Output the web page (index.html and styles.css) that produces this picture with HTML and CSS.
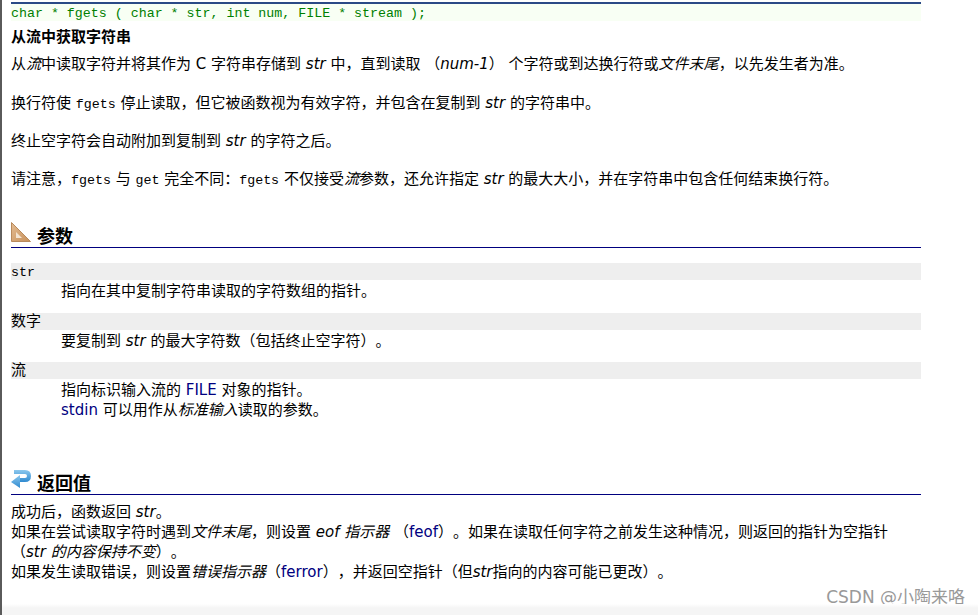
FILE: index.html
```html
<!DOCTYPE html>
<html lang="zh">
<head>
<meta charset="utf-8">
<title>fgets</title>
<link rel="stylesheet" href="styles.css">
</head>
<body>
<main class="page">
  <div class="proto">char * fgets ( char * str, int num, FILE * stream );</div>
  <div class="summary">从流中获取字符串</div>
  <p class="para">从<i>流</i>中读取字符并将其作为 C 字符串存储到 <i>str</i> 中，直到读取 （<i>num-1</i>） 个字符或到达换行符或<i>文件末尾</i>，以先发生者为准。</p>
  <p class="para">换行符使 <code>fgets</code> 停止读取，但它被函数视为有效字符，并包含在复制到 <i>str</i> 的字符串中。</p>
  <p class="para">终止空字符会自动附加到复制到 <i>str</i> 的字符之后。</p>
  <p class="para">请注意，<code>fgets</code> 与 <code>get</code> 完全不同：<code>fgets</code> 不仅接受<i>流</i>参数，还允许指定 <i>str</i> 的最大大小，并在字符串中包含任何结束换行符。</p>

  <h3 class="heading heading-params">
    <svg class="icon" viewBox="0 0 20 20" width="20" height="20" aria-hidden="true"><defs><linearGradient id="ruler" x1="0" y1="0" x2="1" y2="1"><stop offset="0" stop-color="#e3bb91"/><stop offset="1" stop-color="#c8925c"/></linearGradient></defs><path d="M0.5 0.5 L0.5 19.5 L19.5 19.5 Z" fill="url(#ruler)" stroke="#b98a5c" stroke-width="1"/><path d="M5 10 L5 16 L11 16 Z" fill="#f3e4d2"/></svg>
    <span>参数</span>
  </h3>
  <dl class="params">
    <dt>str</dt>
    <dd>指向在其中复制字符串读取的字符数组的指针。</dd>
    <dt class="dt-cjk">数字</dt>
    <dd>要复制到 <i>str</i> 的最大字符数（包括终止空字符）。</dd>
    <dt class="dt-cjk">流</dt>
    <dd>指向标识输入流的 <span class="ref">FILE</span> 对象的指针。<br><span class="ref">stdin</span> 可以用作从<i>标准输入</i>读取的参数。</dd>
  </dl>

  <h3 class="heading heading-return">
    <svg class="icon icon-return" viewBox="0 0 20 20" width="20" height="20" aria-hidden="true"><defs><linearGradient id="arrow" x1="0" y1="0" x2="0" y2="1"><stop offset="0" stop-color="#8cc8ee"/><stop offset="1" stop-color="#2f8ad0"/></linearGradient></defs><path d="M3 1 H14 Q20 1 20 7 Q20 13 14 13 H9 V9 H14 Q16 9 16 7 Q16 5 14 5 H3 Z" fill="url(#arrow)"/><path d="M0 13 L9 6 V19 Z" fill="url(#arrow)"/></svg>
    <span>返回值</span>
  </h3>
  <div class="returns">
    成功后，函数返回 <i>str</i>。<br>
    如果在尝试读取字符时遇到<i>文件末尾</i>，则设置 <i>eof 指示器</i> （<span class="ref">feof</span>）。如果在读取任何字符之前发生这种情况，则返回的指针为空指针<br>
    （<i>str 的内容保持不变</i>）。<br>
    如果发生读取错误，则设置<i>错误指示器</i>（<span class="ref">ferror</span>），并返回空指针（但<i>str</i>指向的内容可能已更改）。
  </div>
</main>
<div class="watermark">CSDN @小陶来咯</div>
<div class="fade"></div>
</body>
</html>
```
FILE: styles.css
```css
html, body {
  margin: 0;
  height: 100%;
  overflow: hidden;
  background: #fff;
}
body {
  position: relative;
  font-family: "DejaVu Sans", "Noto Sans CJK SC", sans-serif;
  font-size: 15px;
  line-height: 19px;
  color: #000;
  border-left: 2px solid #5a5a5a;
  box-sizing: border-box;
  text-spacing-trim: space-all;
}
.page {
  width: 910px;
  padding: 2px 0 0 9px;
}
.proto {
  border-top: 2px solid #2b4a86;
  background: #f8fff4;
  color: #008000;
  font-family: "Liberation Mono", monospace;
  font-size: 13.3px;
  line-height: 15px;
  padding-top: 2px;
}
.summary {
  margin-top: 7px;
  font-weight: bold;
}
.para {
  margin: 0 0 19px;
  line-height: 19.33px;
}
.summary + .para {
  margin-top: 8.4px;
}
code {
  font-family: "Liberation Mono", monospace;
  font-size: 13.3px;
  line-height: 1;
}
.ref {
  color: #000080;
}
.heading {
  display: flex;
  align-items: flex-end;
  gap: 6px;
  margin: 0;
  font-size: 18px;
  line-height: 21px;
  font-weight: bold;
  border-bottom: 1px solid #00007f;
}
.heading-params {
  margin-top: 32px;
}
.heading-return {
  margin-top: 49px;
}
.icon {
  display: block;
  margin-bottom: 5px;
}
.params {
  margin: 15.3px 0 0;
}
.params dt {
  background: #eee;
  font-family: "Liberation Mono", "Noto Sans CJK SC", monospace;
  font-size: 13.3px;
  line-height: 15px;
  padding-top: 2px;
}
.params .dt-cjk {
  font-size: 15px;
}
.params dd {
  margin: 0 0 11.6px 50px;
  padding-top: 1px;
  line-height: 20px;
}
.returns {
  margin-top: 7px;
  line-height: 20px;
}
.watermark {
  position: absolute;
  right: 13px;
  top: 586px;
  font-size: 17px;
  line-height: 22px;
  color: #999;
}
.fade {
  position: absolute;
  left: -2px;
  right: 0;
  bottom: 0;
  height: 11px;
  background: linear-gradient(#fff, #f5f5f5 4px);
}
```
